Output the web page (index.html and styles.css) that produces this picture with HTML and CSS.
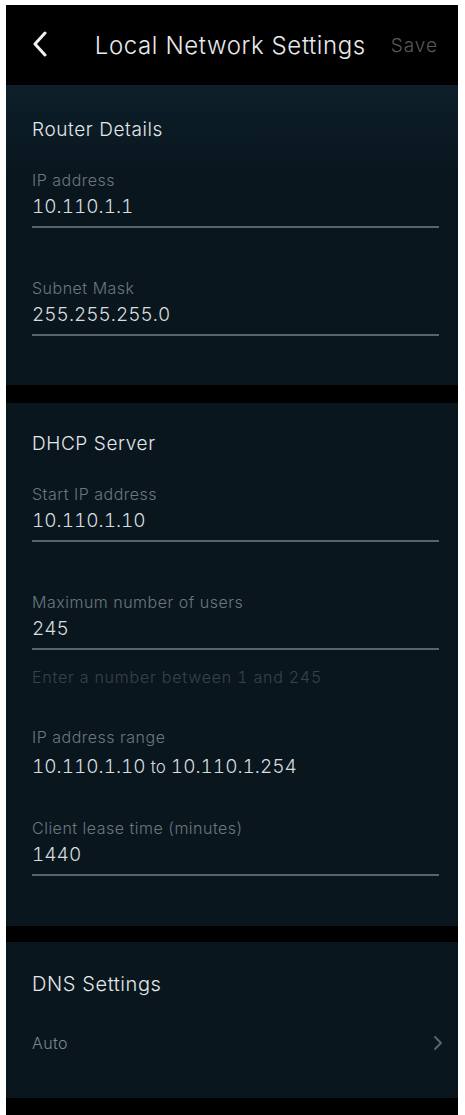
FILE: index.html
```html
<!DOCTYPE html>
<html lang="en">

<head>
    <meta charset="UTF-8">
    <meta name="viewport" content="width=device-width, initial-scale=1.0">
    <title>Local Network Settings</title>
    <link rel="stylesheet" href="styles.css">
</head>

<body>
    <main>
        <!-- ====> Top bar with back button, title and save -->
        <header class="topbar">
            <span class="back">
                <svg width="16" height="26" viewBox="0 0 16 26">
                    <path d="M13 2 L3 13 L13 24" fill="none" stroke="#f2f2f2" stroke-width="3" stroke-linecap="round" stroke-linejoin="round" />
                </svg>
            </span>
            <h1>Local Network Settings</h1>
            <span class="save">Save</span>
        </header>

        <!-- ====> Router details -->
        <section class="card first">
            <h2>Router Details</h2>
            <div class="field">
                <div class="label">IP address</div>
                <div class="value">10.110.1.1</div>
            </div>
            <div class="field">
                <div class="label">Subnet Mask</div>
                <div class="value">255.255.255.0</div>
            </div>
        </section>

        <!-- ====> DHCP server -->
        <section class="card">
            <h2>DHCP Server</h2>
            <div class="field">
                <div class="label">Start IP address</div>
                <div class="value">10.110.1.10</div>
            </div>
            <div class="field">
                <div class="label">Maximum number of users</div>
                <div class="value">245</div>
            </div>
            <div class="hint">Enter a number between 1 and 245</div>
            <div class="range">
                <div class="label">IP address range</div>
                <div class="value">10.110.1.10 <span class="to">to</span> 10.110.1.254</div>
            </div>
            <div class="field">
                <div class="label">Client lease time (minutes)</div>
                <div class="value">1440</div>
            </div>
        </section>

        <!-- ====> DNS settings -->
        <section class="card dns">
            <h2>DNS Settings</h2>
            <div class="row">
                <span>Auto</span>
                <svg width="10" height="16" viewBox="0 0 10 16">
                    <path d="M2 2 L8 8 L2 14" fill="none" stroke="#56646c" stroke-width="2" stroke-linecap="round" stroke-linejoin="round" />
                </svg>
            </div>
        </section>
    </main>
</body>

</html>
```

FILE: styles.css
```css
* {
    padding: 0;
    margin: 0;
    box-sizing: border-box;
}

html,
body {
    height: 100%;
}

body {
    background-color: #ffffff;
    padding: 5px 7px 0 6px;
    font-family: "Inter", "Liberation Sans", sans-serif;
    font-weight: 300;
}

main {
    min-height: 100%;
    background-color: #000000;
    padding-bottom: 23px;
}

.topbar {
    height: 80px;
    display: flex;
    align-items: center;
    padding: 0 20px 0 26px;
}

.topbar .back {
    display: flex;
    width: 16px;
    margin-top: -2px;
}

.topbar h1 {
    flex: 1;
    text-align: center;
    font-size: 24px;
    font-weight: 300;
    color: #e8eaec;
    margin-left: 22px;
    letter-spacing: 0.6px;
}

.topbar .save {
    font-size: 19px;
    color: #565a5c;
    letter-spacing: 1px;
}

.card {
    background-color: #09161e;
    padding: 30px 19px 49px 26px;
    margin-bottom: 16px;
}

.card.first {
    padding-top: 34px;
    padding-bottom: 48px;
    margin-bottom: 18px;
    background: linear-gradient(#0d1f2a, #09161e 30%);
}

.card h2 {
    font-size: 19px;
    font-weight: 300;
    line-height: 22px;
    color: #e4e7e9;
    letter-spacing: 0.6px;
}

.label {
    font-size: 16px;
    line-height: 20px;
    color: #6a7880;
    letter-spacing: 0.5px;
}

.value {
    font-size: 19px;
    line-height: 22px;
    color: #d7dcdf;
    margin-top: 6px;
    font-variant-numeric: tabular-nums;
}

.field {
    margin-top: 29px;
    padding-bottom: 1px;
}

.field .value {
    padding-bottom: 8px;
    border-bottom: 2px solid #56656d;
}

.field + .field {
    margin-top: 49px;
}

.hint {
    margin-top: 16px;
    font-size: 16px;
    line-height: 20px;
    color: #37434b;
    letter-spacing: 0.8px;
    font-variant-numeric: tabular-nums;
}

.range {
    margin-top: 40px;
}

.range .value {
    margin-top: 9px;
}

.range .to {
    font-size: 17px;
}

.range + .field {
    margin-top: 40px;
}

.card.dns {
    padding-top: 30px;
    padding-bottom: 45px;
    margin-bottom: 0;
}

.card.dns h2 {
    font-size: 20px;
    line-height: 24px;
}

.row {
    margin-top: 37px;
    display: flex;
    justify-content: space-between;
    align-items: center;
    font-size: 16px;
    line-height: 20px;
    color: #7a868d;
    letter-spacing: 0.4px;
}

.row svg {
    margin-right: -4px;
}
```
